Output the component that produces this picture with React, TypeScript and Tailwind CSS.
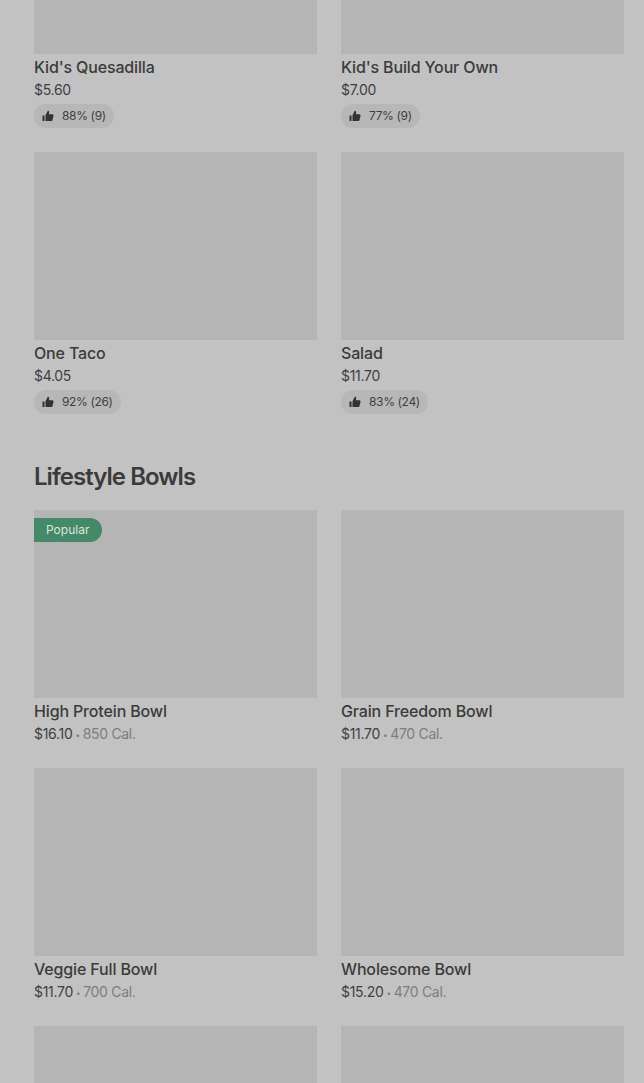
import React from "react";

function Thumb() {
  return (
    <svg width="12" height="12" viewBox="0 0 12 12" className="text-[#333333]" fill="currentColor">
      <path d="M0.5 5.5H2.5V11H0.5Z" />
      <path d="M3.5 11V5.2L5.8 0.8C6.7 0.8 7.3 1.5 7.2 2.4L6.9 4.3H10.3C11.1 4.3 11.7 5 11.5 5.8L10.5 10C10.4 10.6 9.9 11 9.3 11Z" />
    </svg>
  );
}

type Item = { name: string; price: string; rating?: string; cal?: string; badge?: string };

function Card({ item, imageClass = "h-[188px]" }: { item: Item; imageClass?: string }) {
  return (
    <div className="min-w-0">
      <div className={`relative bg-[#b5b5b5] ${imageClass}`}>
        {item.badge && (
          <div className="absolute left-0 top-2 flex h-6 items-center rounded-r-full bg-[#448968] pl-3 pr-[13px] text-[12px] text-[#d9e6df]">
            {item.badge}
          </div>
        )}
      </div>
      <div className="mt-[1px] h-6 text-[16px] leading-[24px] font-medium text-[#3b3b3b] tracking-[-0.15px]">{item.name}</div>
      <div className="mt-[1px] h-5 text-[14px] leading-[20px] text-[#3f3f3f] tracking-[-0.3px]">
        {item.price}
        {item.cal && (
          <span className="text-[#7d7d7d]">
            <span className="mx-[3px] inline-block align-[1px] text-[8px]">•</span>
            {item.cal}
          </span>
        )}
      </div>
      {item.rating && (
        <div className="mt-[4px] flex h-6 w-fit items-center gap-2 rounded-full bg-[#b7b7b7] px-[8px] text-[12px] tracking-[-0.35px] text-[#3f3f3f]">
          <Thumb />
          <span>{item.rating}</span>
        </div>
      )}
    </div>
  );
}

export default function App() {
  return (
    <div className="h-[1083px] overflow-hidden bg-[#c2c2c2] pl-[34px] pr-[20px] font-['Inter',sans-serif]">
      <div className="grid grid-cols-2 gap-x-6 gap-y-6">
        <Card item={{ name: "Kid's Quesadilla", price: "$5.60", rating: "88% (9)" }} imageClass="h-[54px]" />
        <Card item={{ name: "Kid's Build Your Own", price: "$7.00", rating: "77% (9)" }} imageClass="h-[54px]" />
        <Card item={{ name: "One Taco", price: "$4.05", rating: "92% (26)" }} />
        <Card item={{ name: "Salad", price: "$11.70", rating: "83% (24)" }} />
      </div>
      <h2 className="mt-[47px] mb-[17px] text-[24px] leading-[32px] font-semibold text-[#3b3b3b] tracking-[-0.95px]">Lifestyle Bowls</h2>
      <div className="grid grid-cols-2 gap-x-6 gap-y-6">
        <Card item={{ name: "High Protein Bowl", price: "$16.10", cal: "850 Cal.", badge: "Popular" }} />
        <Card item={{ name: "Grain Freedom Bowl", price: "$11.70", cal: "470 Cal." }} />
        <Card item={{ name: "Veggie Full Bowl", price: "$11.70", cal: "700 Cal." }} />
        <Card item={{ name: "Wholesome Bowl", price: "$15.20", cal: "470 Cal." }} />
        <Card item={{ name: "", price: "" }} />
        <Card item={{ name: "", price: "" }} />
      </div>
    </div>
  );
}
